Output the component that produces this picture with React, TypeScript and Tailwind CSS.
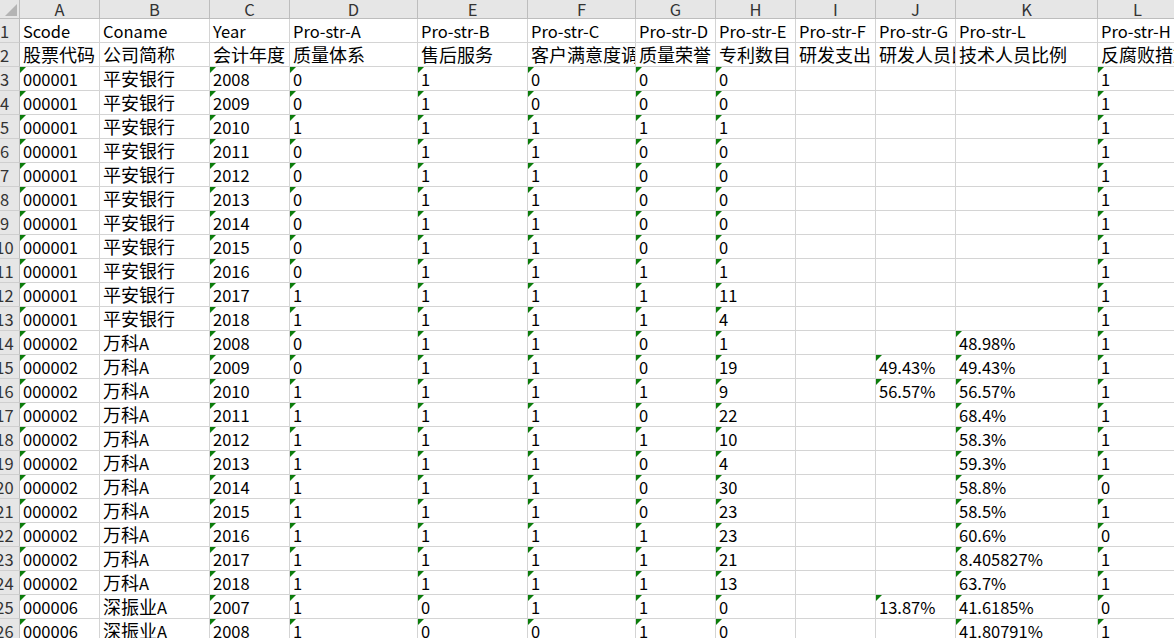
const colLetters = ["A", "B", "C", "D", "E", "F", "G", "H", "I", "J", "K", "L"];

const colWidths = [
  "w-[80px]",
  "w-[110px]",
  "w-[80px]",
  "w-[128px]",
  "w-[110px]",
  "w-[108px]",
  "w-[80px]",
  "w-[80px]",
  "w-[80px]",
  "w-[80px]",
  "w-[142px]",
  "w-[80px]",
];

const headRow1 = ["Scode", "Coname", "Year", "Pro-str-A", "Pro-str-B", "Pro-str-C", "Pro-str-D", "Pro-str-E", "Pro-str-F", "Pro-str-G", "Pro-str-L", "Pro-str-H"];
const headRow2 = ["股票代码", "公司简称", "会计年度", "质量体系", "售后服务", "客户满意度调查", "质量荣誉", "专利数目", "研发支出", "研发人员比例", "技术人员比例", "反腐败措施"];

// code, name, year, D, E, F, G, H, I, J, K, L
const data: string[][] = [
  ["000001", "平安银行", "2008", "0", "1", "0", "0", "0", "", "", "", "1"],
  ["000001", "平安银行", "2009", "0", "1", "0", "0", "0", "", "", "", "1"],
  ["000001", "平安银行", "2010", "1", "1", "1", "1", "1", "", "", "", "1"],
  ["000001", "平安银行", "2011", "0", "1", "1", "0", "0", "", "", "", "1"],
  ["000001", "平安银行", "2012", "0", "1", "1", "0", "0", "", "", "", "1"],
  ["000001", "平安银行", "2013", "0", "1", "1", "0", "0", "", "", "", "1"],
  ["000001", "平安银行", "2014", "0", "1", "1", "0", "0", "", "", "", "1"],
  ["000001", "平安银行", "2015", "0", "1", "1", "0", "0", "", "", "", "1"],
  ["000001", "平安银行", "2016", "0", "1", "1", "1", "1", "", "", "", "1"],
  ["000001", "平安银行", "2017", "1", "1", "1", "1", "11", "", "", "", "1"],
  ["000001", "平安银行", "2018", "1", "1", "1", "1", "4", "", "", "", "1"],
  ["000002", "万科A", "2008", "0", "1", "1", "0", "1", "", "", "48.98%", "1"],
  ["000002", "万科A", "2009", "0", "1", "1", "0", "19", "", "49.43%", "49.43%", "1"],
  ["000002", "万科A", "2010", "1", "1", "1", "1", "9", "", "56.57%", "56.57%", "1"],
  ["000002", "万科A", "2011", "1", "1", "1", "0", "22", "", "", "68.4%", "1"],
  ["000002", "万科A", "2012", "1", "1", "1", "1", "10", "", "", "58.3%", "1"],
  ["000002", "万科A", "2013", "1", "1", "1", "0", "4", "", "", "59.3%", "1"],
  ["000002", "万科A", "2014", "1", "1", "1", "0", "30", "", "", "58.8%", "0"],
  ["000002", "万科A", "2015", "1", "1", "1", "0", "23", "", "", "58.5%", "1"],
  ["000002", "万科A", "2016", "1", "1", "1", "1", "23", "", "", "60.6%", "0"],
  ["000002", "万科A", "2017", "1", "1", "1", "1", "21", "", "", "8.405827%", "1"],
  ["000002", "万科A", "2018", "1", "1", "1", "1", "13", "", "", "63.7%", "1"],
  ["000006", "深振业A", "2007", "1", "0", "1", "1", "0", "", "13.87%", "41.6185%", "0"],
  ["000006", "深振业A", "2008", "1", "0", "0", "1", "0", "", "", "41.80791%", "1"],
];

// Latin glyphs in the sheet are narrower than the CJK ones, so split runs by script
const splitRuns = (s: string) => s.split(/([\u4e00-\u9fff]+)/).filter((p) => p !== "");

const CellText = ({ value }: { value: string }) => (
  <span>
    {splitRuns(value).map((p, i) =>
      /[\u4e00-\u9fff]/.test(p) ? (
        <span key={i} className="text-[18px]">
          {p}
        </span>
      ) : (
        <span key={i}>{p}</span>
      )
    )}
  </span>
);

const Cell = ({ value, width, flag }: { value: string; width: string; flag: boolean }) => (
  <div
    className={`${width} relative flex h-full shrink-0 items-center overflow-hidden whitespace-nowrap border-r border-b border-[#d4d4d4] pl-[3px]`}
  >
    {flag && (
      <div className="absolute top-0 left-0 h-0 w-0 border-t-[6px] border-r-[6px] border-t-[#0b7d0b] border-r-transparent" />
    )}
    <CellText value={value} />
  </div>
);

const RowHeader = ({ n }: { n: number }) => (
  <div className="flex h-full w-[20px] shrink-0 overflow-hidden border-r border-b border-r-[#bdbdbd] border-b-[#cfcfcf] bg-[#e6e6e6]">
    <div className="flex w-[9px] items-center justify-center text-[#333]">
      <span>{n}</span>
    </div>
  </div>
);

export default function App() {
  return (
    <div className="h-[638px] w-[1174px] overflow-hidden bg-white font-['Noto_Sans_CJK_SC','Noto_Sans',sans-serif] text-[16.5px] leading-[22px] text-black">
      {/* column letters */}
      <div className="flex h-[19px]">
        <div className="relative w-[20px] shrink-0 border-r border-b border-[#bdbdbd] bg-[#e6e6e6]">
          <svg className="absolute right-[2px] bottom-[2px]" width="12" height="12" viewBox="0 0 12 12">
            <polygon points="12,0 12,12 0,12" fill="#b4b4b4" />
          </svg>
        </div>
        {colLetters.map((c, i) => (
          <div
            key={c}
            className={`${colWidths[i]} flex shrink-0 items-center justify-center border-r border-b border-[#bdbdbd] bg-[#e6e6e6] leading-[19px] text-[#333]`}
          >
            {c}
          </div>
        ))}
      </div>

      {/* header rows */}
      {[headRow1, headRow2].map((row, r) => (
        <div key={r} className="flex h-[24px]">
          <RowHeader n={r + 1} />
          {row.map((v, i) => (
            <Cell key={i} value={v} width={colWidths[i]} flag={false} />
          ))}
        </div>
      ))}

      {/* data rows */}
      {data.map((row, r) => (
        <div key={r} className="flex h-[24px]">
          <RowHeader n={r + 3} />
          {row.map((v, i) => (
            <Cell key={i} value={v} width={colWidths[i]} flag={v !== "" && i !== 1} />
          ))}
        </div>
      ))}
    </div>
  );
}
